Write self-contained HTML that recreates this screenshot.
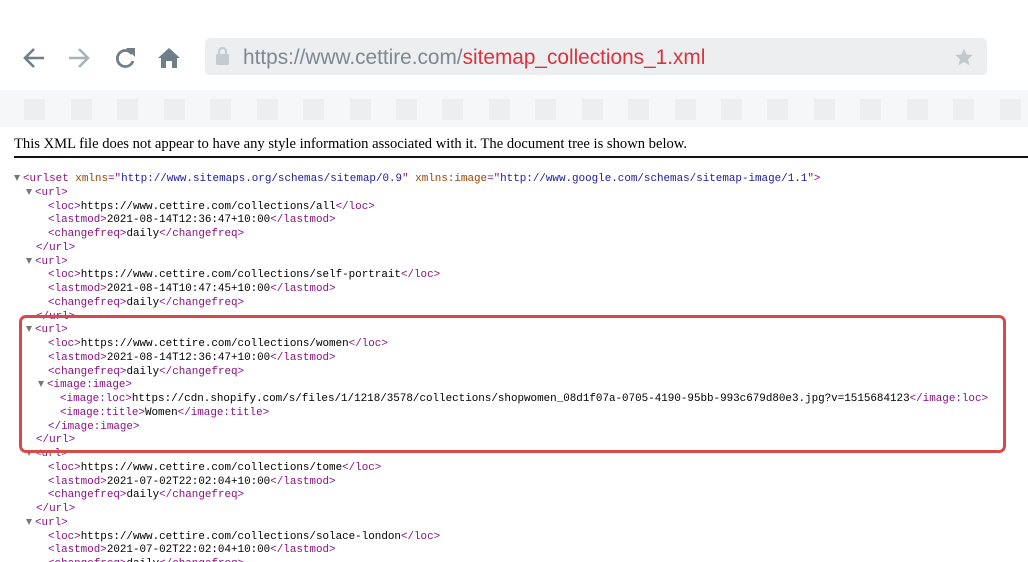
<!DOCTYPE html>
<html><head><meta charset="utf-8"><style>
html,body{margin:0;width:1028px;height:562px;overflow:hidden}
body{background:#fff;position:relative;font-family:"Liberation Sans",sans-serif}
.addr{position:absolute;left:205px;top:38px;width:782px;height:37px;background:#eceef0;border-radius:5px}
.url{position:absolute;left:243px;top:46px;font-size:20.8px;color:#7d8891;white-space:nowrap;letter-spacing:0px}
.url span{color:#d9333f}
.strip{position:absolute;left:0;top:90px;width:1028px;height:37px;background:#f6f7f8}
.sq{position:absolute;top:99px;width:21px;height:21px;background:#eceef0}
.msg{position:absolute;left:14px;top:136px;font-family:"Liberation Serif",serif;font-size:14.6px;color:#000}
.hr{position:absolute;left:14px;top:156px;width:1014px;height:2px;background:#111}
.xml{position:absolute;left:0;top:173px;font-family:"Liberation Mono",monospace;font-size:10.9px;line-height:13.75px;color:#000}
.xml div{height:13.75px;white-space:pre}
.t{color:#881280}.an{color:#994500}.av{color:#1a1aa6}
.tri{display:inline-block;width:0;height:0;border-left:3.5px solid transparent;border-right:3.5px solid transparent;border-top:6px solid #777;margin-right:3px;vertical-align:0px}
.box{position:absolute;left:19px;top:315px;width:981px;height:132px;border:3.5px solid #d64a4a;border-radius:7px}
</style></head><body>
<svg style="position:absolute;left:22px;top:44px" width="170" height="28" viewBox="0 0 170 28">
<path d="M22 14H4M12 5L3 14l9 9" stroke="#6e7f88" stroke-width="2.6" fill="none"/>
<path d="M47 14h18M57 5l9 9-9 9" stroke="#a9b4ba" stroke-width="2.6" fill="none"/>
<path d="M110 10a8 8 0 1 0 1 7" stroke="#6e7f88" stroke-width="2.8" fill="none"/>
<path d="M104 4h9v9z" fill="#6e7f88"/>
<path d="M147 4l11 10h-3v10h-5v-7h-6v7h-5V14h-3z" fill="#6e7f88"/>
</svg>
<div class="addr"></div>
<svg style="position:absolute;left:214px;top:46px" width="18" height="20"><rect x="2" y="8" width="13" height="11" rx="1.5" fill="#c5cbcf"/><path d="M5 8V5.5a3.5 3.5 0 0 1 7 0V8" stroke="#c5cbcf" stroke-width="2.2" fill="none"/></svg>
<div class="url">https://www.cettire.com/<span>sitemap_collections_1.xml</span></div>
<svg style="position:absolute;left:954px;top:47px" width="20" height="20" viewBox="0 0 24 24"><path d="M12 2l3 7 7.5.6-5.7 5 1.8 7.4L12 18l-6.6 4 1.8-7.4-5.7-5L9 9z" fill="#c2c9ce"/></svg>
<div class="strip"></div>
<div class="sq" style="left:24px"></div><div class="sq" style="left:71px"></div><div class="sq" style="left:117px"></div><div class="sq" style="left:164px"></div><div class="sq" style="left:210px"></div><div class="sq" style="left:257px"></div><div class="sq" style="left:303px"></div><div class="sq" style="left:350px"></div><div class="sq" style="left:396px"></div><div class="sq" style="left:442px"></div><div class="sq" style="left:489px"></div><div class="sq" style="left:535px"></div><div class="sq" style="left:582px"></div><div class="sq" style="left:628px"></div><div class="sq" style="left:675px"></div><div class="sq" style="left:721px"></div><div class="sq" style="left:767px"></div><div class="sq" style="left:814px"></div><div class="sq" style="left:860px"></div><div class="sq" style="left:907px"></div><div class="sq" style="left:953px"></div><div class="sq" style="left:1000px"></div>
<div class="msg">This XML file does not appear to have any style information associated with it. The document tree is shown below.</div>
<div class="hr"></div>
<div class="xml"><div style="padding-left:14px"><span class="tri"></span><span class="t">&lt;urlset <span class="an">xmlns</span>="<span class="av">http://www.sitemaps.org/schemas/sitemap/0.9</span>" <span class="an">xmlns:image</span>="<span class="av">http://www.google.com/schemas/sitemap-image/1.1</span>"&gt;</span></div><div style="padding-left:26px"><span class="tri"></span><span class="t">&lt;url&gt;</span></div><div style="padding-left:48px"><span class="t">&lt;loc&gt;</span>https://www.cettire.com/collections/all<span class="t">&lt;/loc&gt;</span></div><div style="padding-left:48px"><span class="t">&lt;lastmod&gt;</span>2021-08-14T12:36:47+10:00<span class="t">&lt;/lastmod&gt;</span></div><div style="padding-left:48px"><span class="t">&lt;changefreq&gt;</span>daily<span class="t">&lt;/changefreq&gt;</span></div><div style="padding-left:36px"><span class="t">&lt;/url&gt;</span></div><div style="padding-left:26px"><span class="tri"></span><span class="t">&lt;url&gt;</span></div><div style="padding-left:48px"><span class="t">&lt;loc&gt;</span>https://www.cettire.com/collections/self-portrait<span class="t">&lt;/loc&gt;</span></div><div style="padding-left:48px"><span class="t">&lt;lastmod&gt;</span>2021-08-14T10:47:45+10:00<span class="t">&lt;/lastmod&gt;</span></div><div style="padding-left:48px"><span class="t">&lt;changefreq&gt;</span>daily<span class="t">&lt;/changefreq&gt;</span></div><div style="padding-left:36px"><span class="t">&lt;/url&gt;</span></div><div style="padding-left:26px"><span class="tri"></span><span class="t">&lt;url&gt;</span></div><div style="padding-left:48px"><span class="t">&lt;loc&gt;</span>https://www.cettire.com/collections/women<span class="t">&lt;/loc&gt;</span></div><div style="padding-left:48px"><span class="t">&lt;lastmod&gt;</span>2021-08-14T12:36:47+10:00<span class="t">&lt;/lastmod&gt;</span></div><div style="padding-left:48px"><span class="t">&lt;changefreq&gt;</span>daily<span class="t">&lt;/changefreq&gt;</span></div><div style="padding-left:38px"><span class="tri"></span><span class="t">&lt;image:image&gt;</span></div><div style="padding-left:60px"><span class="t">&lt;image:loc&gt;</span>https://cdn.shopify.com/s/files/1/1218/3578/collections/shopwomen_08d1f07a-0705-4190-95bb-993c679d80e3.jpg?v=1515684123<span class="t">&lt;/image:loc&gt;</span></div><div style="padding-left:60px"><span class="t">&lt;image:title&gt;</span>Women<span class="t">&lt;/image:title&gt;</span></div><div style="padding-left:48px"><span class="t">&lt;/image:image&gt;</span></div><div style="padding-left:36px"><span class="t">&lt;/url&gt;</span></div><div style="padding-left:26px"><span class="tri"></span><span class="t">&lt;url&gt;</span></div><div style="padding-left:48px"><span class="t">&lt;loc&gt;</span>https://www.cettire.com/collections/tome<span class="t">&lt;/loc&gt;</span></div><div style="padding-left:48px"><span class="t">&lt;lastmod&gt;</span>2021-07-02T22:02:04+10:00<span class="t">&lt;/lastmod&gt;</span></div><div style="padding-left:48px"><span class="t">&lt;changefreq&gt;</span>daily<span class="t">&lt;/changefreq&gt;</span></div><div style="padding-left:36px"><span class="t">&lt;/url&gt;</span></div><div style="padding-left:26px"><span class="tri"></span><span class="t">&lt;url&gt;</span></div><div style="padding-left:48px"><span class="t">&lt;loc&gt;</span>https://www.cettire.com/collections/solace-london<span class="t">&lt;/loc&gt;</span></div><div style="padding-left:48px"><span class="t">&lt;lastmod&gt;</span>2021-07-02T22:02:04+10:00<span class="t">&lt;/lastmod&gt;</span></div><div style="padding-left:48px"><span class="t">&lt;changefreq&gt;</span>daily<span class="t">&lt;/changefreq&gt;</span></div></div>
<div class="box"></div>
</body></html>
